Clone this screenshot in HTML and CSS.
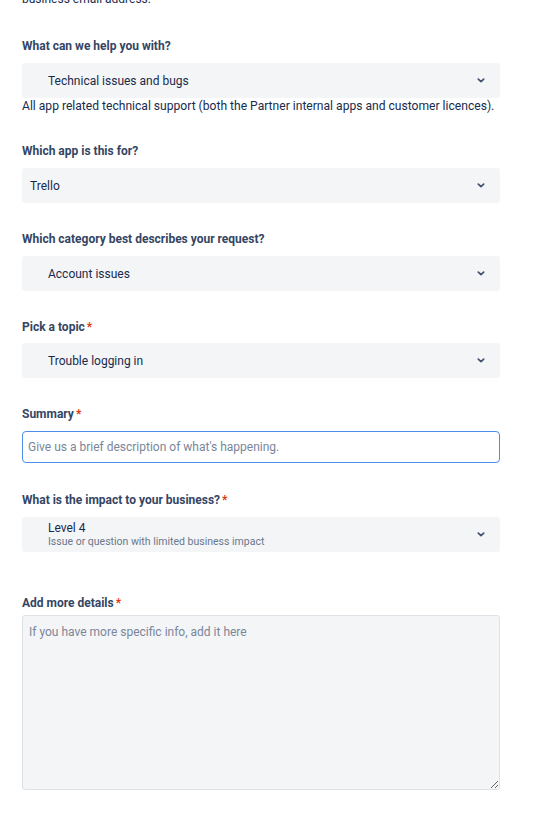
FILE: index.html
```html
<!DOCTYPE html>
<html>
<head>
<meta charset="utf-8">
<link rel="stylesheet" href="styles.css">
</head>
<body>
<div class="page">
  <p class="intro">business email address.</p>

  <div class="field f1">
    <div class="label">What can we help you with?</div>
    <div class="select indent"><span class="value">Technical issues and bugs</span><svg class="chev" viewBox="0 0 8 5"><path d="M1.3 1.1 L4 3.7 L6.7 1.1"/></svg></div>
    <p class="help">All app related technical support (both the Partner internal apps and customer licences).</p>
  </div>

  <div class="field f2">
    <div class="label">Which app is this for?</div>
    <div class="select"><span class="value">Trello</span><svg class="chev" viewBox="0 0 8 5"><path d="M1.3 1.1 L4 3.7 L6.7 1.1"/></svg></div>
  </div>

  <div class="field f3">
    <div class="label">Which category best describes your request?</div>
    <div class="select indent"><span class="value">Account issues</span><svg class="chev" viewBox="0 0 8 5"><path d="M1.3 1.1 L4 3.7 L6.7 1.1"/></svg></div>
  </div>

  <div class="field f4">
    <div class="label">Pick a topic<span class="req">*</span></div>
    <div class="select indent"><span class="value">Trouble logging in</span><svg class="chev" viewBox="0 0 8 5"><path d="M1.3 1.1 L4 3.7 L6.7 1.1"/></svg></div>
  </div>

  <div class="field f5">
    <div class="label">Summary<span class="req">*</span></div>
    <input class="text" type="text" placeholder="Give us a brief description of what's happening.">
  </div>

  <div class="field f6">
    <div class="label">What is the impact to your business?<span class="req">*</span></div>
    <div class="select indent"><span class="value"><span class="main">Level 4</span><span class="sub">Issue or question with limited business impact</span></span><svg class="chev" viewBox="0 0 8 5"><path d="M1.3 1.1 L4 3.7 L6.7 1.1"/></svg></div>
  </div>

  <div class="field f7">
    <div class="label">Add more details<span class="req">*</span></div>
    <textarea class="area" placeholder="If you have more specific info, add it here"></textarea>
  </div>
</div>
</body>
</html>
```

FILE: styles.css
```css
html, body {
  margin: 0;
  padding: 0;
  background: #ffffff;
}
body {
  font-family: Roboto, "Liberation Sans", sans-serif;
  color: #172b4d;
  overflow: hidden;
}
.page {
  width: 478px;
  padding: 0 0 0 22px;
}
.intro {
  margin: -9px 0 0 0;
  font-size: 12px;
  line-height: 16px;
}
.field {
  margin-top: 27px;
}
.f1 { margin-top: 31px; }
.f2 { margin-top: 29px; }
.f3 { margin-top: 28px; }
.f4 { margin-top: 28px; }
.f5 { margin-top: 28px; }
.f6 { margin-top: 29px; }
.f7 { margin-top: 43px; }
.label {
  font-size: 12px;
  font-weight: 700;
  line-height: 17px;
  color: #344563;
  margin-bottom: 8px;
}
.f4 .label { margin-bottom: 7px; }
.f5 .label { margin-bottom: 8px; }
.f7 .label { margin-bottom: 3px; }
.req {
  color: #de350b;
  margin-left: 2px;
}
.select {
  height: 35px;
  background: #f4f5f7;
  border-radius: 3px;
  display: flex;
  align-items: center;
  padding: 0 15px 0 8px;
  box-sizing: border-box;
}
.select.indent {
  padding-left: 26px;
}
.value {
  flex: 1;
  font-size: 12px;
  line-height: 16px;
  color: #172b4d;
  display: flex;
  flex-direction: column;
}
.main {
  font-size: 12px;
  line-height: 14px;
}
.sub {
  font-size: 10.5px;
  line-height: 13px;
  color: #6b778c;
}
.chev {
  width: 8px;
  height: 5px;
  fill: none;
  stroke: #42526e;
  stroke-width: 1.7;
  stroke-linecap: round;
  stroke-linejoin: round;
}
.help {
  margin: 0;
  font-size: 12.1px;
  line-height: 16px;
  color: #172b4d;
}
.text {
  display: block;
  width: 478px;
  height: 32px;
  box-sizing: border-box;
  border: 1px solid #4c8de8;
  border-radius: 4px;
  padding: 0 5px;
  font-family: Roboto, "Liberation Sans", sans-serif;
  font-size: 12px;
  color: #172b4d;
  background: #fff;
  outline: none;
}
.text::placeholder,
.area::placeholder {
  color: #7a869a;
}
.area {
  display: block;
  width: 478px;
  height: 175px;
  box-sizing: border-box;
  background: #f4f5f7;
  border: 1px solid #dfe1e6;
  border-radius: 3px;
  padding: 8px 6px;
  font-family: Roboto, "Liberation Sans", sans-serif;
  font-size: 12px;
  line-height: 16px;
  color: #172b4d;
  outline: none;
}
```
